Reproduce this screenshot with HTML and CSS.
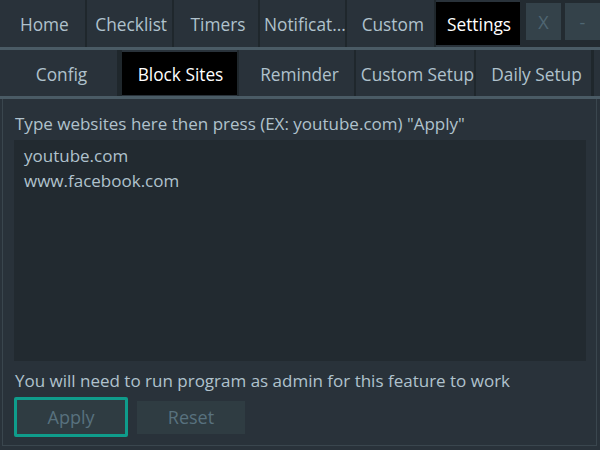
FILE: index.html
```html
<!DOCTYPE html>
<html>
<head>
<meta charset="utf-8">
<link rel="stylesheet" href="styles.css">
</head>
<body>
<div class="app">
  <div class="tabbar main">
    <div class="tab w86">Home</div>
    <div class="tab w86">Checklist</div>
    <div class="tab w87">Timers</div>
    <div class="tab w87">Notificat...</div>
    <div class="tab w89">Custom</div>
    <div class="tab active w84">Settings</div>
    <div class="winbtns">
      <div class="winbtn">X</div>
      <div class="winbtn">-</div>
    </div>
  </div>
  <div class="rule"></div>
  <div class="tabbar sub">
    <div class="tab s122">Config</div>
    <div class="tab active s115">Block Sites</div>
    <div class="tab s119">Reminder</div>
    <div class="tab s120">Custom Setup</div>
    <div class="tab s117">Daily Setup</div>
    <div class="subtail"></div>
  </div>
  <div class="rule"></div>
  <div class="pane">
    <div class="label">Type websites here then press (EX: youtube.com) "Apply"</div>
    <div class="editor">youtube.com<br>www.facebook.com</div>
    <div class="note">You will need to run program as admin for this feature to work</div>
    <div class="buttons">
      <div class="btn apply">Apply</div>
      <div class="btn reset">Reset</div>
    </div>
  </div>
</div>
</body>
</html>
```
FILE: styles.css
```css
html, body {
  margin: 0;
  padding: 0;
  background: #29323a;
}
.app {
  width: 600px;
  height: 450px;
  overflow: hidden;
  font-family: "Open Sans", "Noto Sans", sans-serif;
  font-size: 17px;
  color: #b0c2cd;
  background: #29323a;
  display: flex;
  flex-direction: column;
}
.tabbar {
  display: flex;
  height: 47px;
  flex: none;
}
.tabbar.sub {
  height: 46px;
}
.tab {
  box-sizing: border-box;
  display: flex;
  align-items: center;
  justify-content: center;
  border-right: 2px solid #1f272c;
  white-space: nowrap;
  padding: 2px 0 0 4px;
  font-size: 17.3px;
}
.tab.active {
  background: #000;
  color: #fff;
  border-right: none;
  padding-left: 2px;
}
.main .tab.active {
  margin: 2px 0 2px 0;
}
.sub .tab.active {
  margin: 2px 0 1px 0;
}
.w86 { width: 87px; }
.w87 { width: 87px; }
.w89 { width: 89px; }
.w84 { width: 84px; }
.s122 { width: 122px; border-right-width: 5px; padding-left: 6px; }
.s115 { width: 115px; }
.s119 { width: 119px; border-left: 2px solid #1f272c; padding-left: 6px; }
.s120 { width: 120px; padding-left: 5px; }
.s117 { width: 117px; padding-left: 6px; }
.subtail {
  flex: 1;
  border-left: 1px solid #1f272c;
}
.winbtns {
  flex: 1;
  display: flex;
  gap: 4px;
  padding: 3px 0 7px 6px;
  background: #232b31;
}
.winbtn {
  width: 35px;
  background: #34424a;
  color: #4f6672;
  display: flex;
  align-items: center;
  justify-content: center;
  font-size: 18px;
}
.rule {
  height: 3px;
  background: #4a5b65;
  flex: none;
}
.pane {
  flex: 1;
  margin: 0 3px 4px 2px;
  border-left: 1px solid #3a464e;
  border-right: 1px solid #3a464e;
  border-bottom: 1px solid #3a464e;
  padding: 12px 10px 0 11px;
  display: flex;
  flex-direction: column;
}
.label {
  height: 29px;
  line-height: 26px;
  margin-left: 1px;
}
.editor {
  height: 221px;
  background: #222a30;
  padding: 3px 10px;
  line-height: 25px;
  box-sizing: border-box;
}
.note {
  height: 36px;
  line-height: 40px;
  margin-left: 1px;
}
.buttons {
  display: flex;
  align-items: center;
  gap: 9px;
  height: 40px;
}
.btn {
  box-sizing: border-box;
  display: flex;
  align-items: center;
  justify-content: center;
  background: #2f3c42;
  color: #58717e;
  font-size: 18px;
}
.apply {
  width: 114px;
  height: 40px;
  border: 3px solid #0f9c8b;
  border-radius: 2px;
}
.reset {
  width: 108px;
  height: 33px;
}
```
